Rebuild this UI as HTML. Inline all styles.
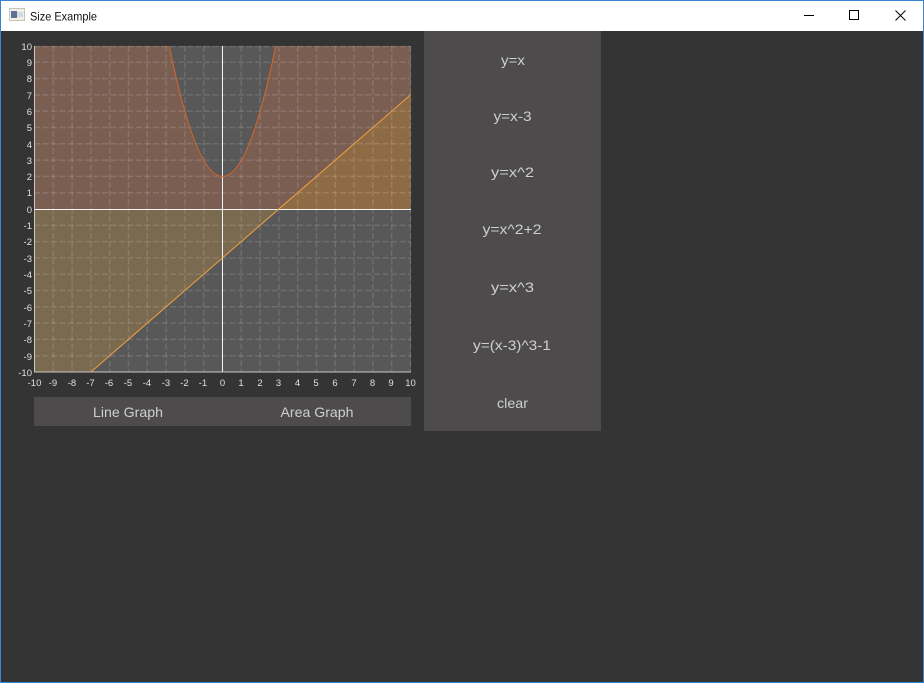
<!DOCTYPE html>
<html><head><meta charset="utf-8"><style>
html,body{margin:0;padding:0;width:924px;height:683px;overflow:hidden;background:#343434}
svg{display:block}
text{font-family:"Liberation Sans",sans-serif}
.t{font-size:9.5px;fill:#e0e0e0}
.b{font-size:14px;fill:#cfcfcf;text-anchor:middle}
</style></head><body>
<svg width="924" height="683" viewBox="0 0 924 683" xmlns="http://www.w3.org/2000/svg">
<rect width="924" height="683" fill="#343434"/>
<rect width="924" height="31" fill="#fff"/>
<rect x="0.5" y="0.5" width="923" height="682" fill="none" stroke="#3b85d0"/>
<!-- app icon -->
<rect x="9.5" y="8.5" width="15" height="12" fill="#f1efe6" stroke="#c9c5b5"/>
<rect x="11" y="11" width="6" height="7" fill="#5a7298"/>
<rect x="17" y="12" width="6" height="5" fill="#cfdbe0"/>
<text x="30" y="20.5" font-size="12" fill="#111" textLength="67" lengthAdjust="spacingAndGlyphs">Size Example</text>
<!-- window buttons -->
<rect x="804" y="15" width="10" height="1" fill="#000"/>
<rect x="849.5" y="10.5" width="9" height="9" fill="none" stroke="#000"/>
<path d="M895.5 10.5L905.5 20.5M905.5 10.5L895.5 20.5" stroke="#000" fill="none"/>
<!-- plot -->
<rect x="34" y="46" width="377" height="326" fill="#585858"/>
<path d="M34.5 46L169.3 46Q222.5 306.8 275.7 46L410.5 46L410.5 209L34.5 209Z" fill="#7a5e52"/>
<path d="M34.5 209L278.9 209L90.9 372L34.5 372Z" fill="#7a6a50"/>
<path d="M278.9 209L410.5 94.9L410.5 209Z" fill="#8f6b45"/>
<g stroke="#fff" stroke-opacity=".13" stroke-width="1.5" stroke-dasharray="6 2.5" fill="none">
<path d="M53.3 46V372M72.1 46V372M90.9 46V372M109.7 46V372M128.5 46V372M147.3 46V372M166.1 46V372M184.9 46V372M203.7 46V372M241.3 46V372M260.1 46V372M278.9 46V372M297.7 46V372M316.5 46V372M335.3 46V372M354.1 46V372M372.9 46V372M391.7 46V372M410.5 46V372"/>
<path d="M34 46.5H411M34 62.3H411M34 78.6H411M34 94.9H411M34 111.2H411M34 127.5H411M34 143.8H411M34 160.1H411M34 176.4H411M34 192.7H411M34 225.3H411M34 241.6H411M34 257.9H411M34 274.2H411M34 290.5H411M34 306.8H411M34 323.1H411M34 339.4H411M34 355.7H411"/>
</g>
<path d="M222.5 46V372M34 209.5H411" stroke="#f4f4f4" fill="none"/>
<path d="M34.5 46V372H411" stroke="#c9c9c4" fill="none"/>
<path d="M169.3 46Q222.5 306.8 275.7 46" stroke="#d9642a" fill="none"/>
<path d="M90.9 372L410.5 94.9" stroke="#f0a040" fill="none"/>
<!-- y labels -->
<g class="t" text-anchor="end">
<text x="32" y="50">10</text><text x="32" y="66">9</text><text x="32" y="82">8</text><text x="32" y="99">7</text><text x="32" y="115">6</text><text x="32" y="131">5</text><text x="32" y="148">4</text><text x="32" y="164">3</text><text x="32" y="180">2</text><text x="32" y="196">1</text><text x="32" y="213">0</text><text x="32" y="229">-1</text><text x="32" y="245">-2</text><text x="32" y="262">-3</text><text x="32" y="278">-4</text><text x="32" y="294">-5</text><text x="32" y="311">-6</text><text x="32" y="327">-7</text><text x="32" y="343">-8</text><text x="32" y="360">-9</text><text x="32" y="376">-10</text>
</g>
<!-- x labels -->
<g class="t" text-anchor="middle">
<text x="34.5" y="386">-10</text><text x="53" y="386">-9</text><text x="72" y="386">-8</text><text x="90.5" y="386">-7</text><text x="109" y="386">-6</text><text x="128" y="386">-5</text><text x="147" y="386">-4</text><text x="166" y="386">-3</text><text x="184.5" y="386">-2</text><text x="203" y="386">-1</text><text x="222.5" y="386">0</text><text x="241" y="386">1</text><text x="260" y="386">2</text><text x="278.5" y="386">3</text><text x="297.5" y="386">4</text><text x="316" y="386">5</text><text x="335" y="386">6</text><text x="354" y="386">7</text><text x="372.5" y="386">8</text><text x="391" y="386">9</text><text x="410.5" y="386">10</text>
</g>
<!-- bottom bar -->
<rect x="34" y="397" width="377" height="29" fill="#4d4b4b"/>
<text class="b" x="128" y="417" textLength="70" lengthAdjust="spacingAndGlyphs">Line Graph</text>
<text class="b" x="317" y="417" textLength="73" lengthAdjust="spacingAndGlyphs">Area Graph</text>
<!-- side panel -->
<rect x="424" y="31" width="177" height="400" fill="#4d4b4b"/>
<g>
<text class="b" x="513" y="65" textLength="24" lengthAdjust="spacingAndGlyphs">y=x</text>
<text class="b" x="512.5" y="121" textLength="38" lengthAdjust="spacingAndGlyphs">y=x-3</text>
<text class="b" x="512.5" y="177" textLength="43" lengthAdjust="spacingAndGlyphs">y=x^2</text>
<text class="b" x="512" y="234" textLength="59" lengthAdjust="spacingAndGlyphs">y=x^2+2</text>
<text class="b" x="512.5" y="292" textLength="43" lengthAdjust="spacingAndGlyphs">y=x^3</text>
<text class="b" x="512" y="350" textLength="78" lengthAdjust="spacingAndGlyphs">y=(x-3)^3-1</text>
<text class="b" x="512.5" y="408" textLength="31" lengthAdjust="spacingAndGlyphs">clear</text>
</g>
</svg>
</body></html>
